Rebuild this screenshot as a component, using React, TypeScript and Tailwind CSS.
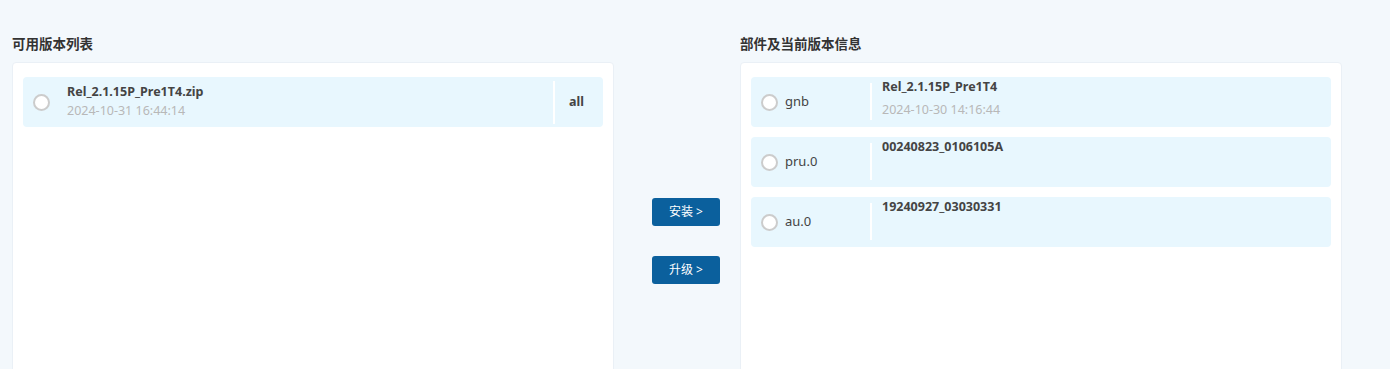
import React from 'react';

const font = { fontFamily: '"Noto Sans", "Noto Sans CJK SC", sans-serif' };

function Radio() {
  return <span className="block w-[17px] h-[17px] rounded-full border-2 border-[#cccccc] bg-white shrink-0" />;
}

const parts = [
  { name: 'gnb', version: 'Rel_2.1.15P_Pre1T4', time: '2024-10-30 14:16:44' },
  { name: 'pru.0', version: '00240823_0106105A', time: '' },
  { name: 'au.0', version: '19240927_03030331', time: '' },
];

export default function App() {
  return (
    <div className="w-[1390px] h-[369px] overflow-hidden bg-[#f3f8fc] pt-[34px] pl-[12px] flex text-[#333]" style={font}>
      <div className="w-[602px] shrink-0">
        <div className="h-[20px] leading-[20px] text-[13.5px] font-bold text-[#333] mb-[8px]">可用版本列表</div>
        <div className="h-[330px] bg-white border border-[#eaf0f6] rounded-[4px] pt-[14px] px-[10px]">
          <div className="h-[50px] bg-[#e8f7fe] rounded-[4px] flex items-center">
            <div className="pl-[10px] pr-[17px] flex items-center"><Radio /></div>
            <div className="flex-1 self-start pt-[5px]">
              <div className="text-[12.5px] leading-[19px] font-bold text-[#444]">Rel_2.1.15P_Pre1T4.zip</div>
              <div className="text-[12.5px] leading-[19px] text-[#b8b8b8]">2024-10-31 16:44:14</div>
            </div>
            <div className="w-[2px] h-[43px] bg-white" />
            <div className="w-[48px] pl-[14px] text-[12.5px] font-bold text-[#444]">all</div>
          </div>
        </div>
      </div>

      <div className="w-[126px] shrink-0 pl-[38px] pt-[164px] flex flex-col gap-[30px]">
        <button className="w-[68px] h-[28px] bg-[#0b609d] text-white text-[12px] rounded-[3px]">安装 &gt;</button>
        <button className="w-[68px] h-[28px] bg-[#0b609d] text-white text-[12px] rounded-[3px]">升级 &gt;</button>
      </div>

      <div className="w-[602px] shrink-0">
        <div className="h-[20px] leading-[20px] text-[13.5px] font-bold text-[#333] mb-[8px]">部件及当前版本信息</div>
        <div className="h-[330px] bg-white border border-[#eaf0f6] rounded-[4px] pt-[14px] px-[10px] flex flex-col gap-[10px]">
          {parts.map((p) => (
            <div key={p.name} className="h-[50px] bg-[#e8f7fe] rounded-[4px] flex items-center">
              <div className="pl-[10px] pr-[7px] flex items-center"><Radio /></div>
              <div className="w-[85px] text-[13px] text-[#444]">{p.name}</div>
              <div className="w-[2px] h-[37px] bg-white self-start mt-[6px]" />
              <div className="flex-1 self-start pl-[10px] pt-[1px]">
                <div className="text-[12.5px] leading-[18px] font-bold text-[#444]">{p.version}</div>
                <div className="text-[12.5px] leading-[18px] text-[#b8b8b8] mt-[5px]">{p.time}</div>
              </div>
            </div>
          ))}
        </div>
      </div>
    </div>
  );
}
